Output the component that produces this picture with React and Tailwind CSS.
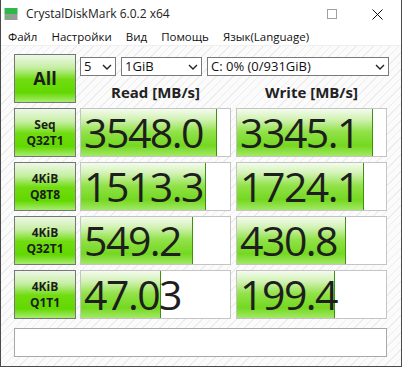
import React from 'react';

const rows = [
    { l1: 'Seq', l2: 'Q32T1', read: '3548.0', rw: 136, write: '3345.1', ww: 136 },
    { l1: '4KiB', l2: 'Q8T8', read: '1513.3', rw: 125, write: '1724.1', ww: 127 },
    { l1: '4KiB', l2: 'Q32T1', read: '549.2', rw: 112, write: '430.8', ww: 109 },
    { l1: '4KiB', l2: 'Q1T1', read: '47.03', rw: 80, write: '199.4', ww: 98 },
];

const btnBg =
    'bg-[linear-gradient(to_bottom,#eef8e8_0%,#c4eea0_28%,#70dc10_52%,#62d800_80%,#a8ec70_100%)]';

function Chevron() {
    return (
        <svg width="10" height="6" viewBox="0 0 10 6" className="shrink-0">
            <path d="M1 1 L5 5 L9 1" fill="none" stroke="#222" strokeWidth="1.4" />
        </svg>
    );
}

function Select({ w, text }) {
    return (
        <div className={`${w} h-[19px] border border-[#7a7a7a] bg-white flex items-center justify-between pl-[3px] pr-[3px] text-[13px] leading-none text-[#111]`}>
            <span>{text}</span>
            <Chevron />
        </div>
    );
}

function TestButton({ children, big }) {
    return (
        <div className={`w-[62px] h-[49px] border border-[#767676] ${btnBg} flex flex-col items-center justify-center font-bold text-[#1c1c1c] ${big ? 'text-[18px]' : 'text-[12px] leading-[16px]'}`}>
            {children}
        </div>
    );
}

function Meter({ value, fill }) {
    return (
        <div className="relative w-[151px] h-[49px] border border-[#c4c4c4] bg-white">
            <div
                className="absolute left-0 top-0 bottom-0 border-r border-[#3f8f12] bg-[linear-gradient(to_bottom,#f4fbef_0%,#d2f2b4_22%,#92e24a_48%,#74d820_78%,#a2e866_100%)]"
                style={{ width: fill }}
            />
            <div className="relative h-full flex items-center pl-[3px] text-[41px] leading-[47px] text-[#1e1e1e] tracking-[-1.5px] whitespace-nowrap">
                {value}
            </div>
        </div>
    );
}

export default function App() {
    return (
        <div className="w-[402px] h-[367px] bg-white border-x border-b border-[#4a4a4a] flex flex-col overflow-hidden font-['Open_Sans',sans-serif]">
            {/* Title bar */}
            <div className="h-[28px] flex items-center shrink-0">
                <svg width="14" height="14" viewBox="0 0 14 14" className="ml-[3px] mr-[8px]">
                    <rect x="0.5" y="1" width="13" height="6" fill="#2fb84a" />
                    <rect x="0.5" y="7" width="13" height="6" fill="#9a9a9a" />
                    <rect x="2" y="9" width="3" height="2" fill="#3ad14e" />
                </svg>
                <span className="text-[12px] text-[#222]">CrystalDiskMark 6.0.2 x64</span>
                <div className="ml-auto flex items-center">
                    <div className="w-[10px] h-[10px] border border-[#a0a0a0] mr-[35px]" />
                    <svg width="11" height="11" viewBox="0 0 11 11" className="mr-[18px]">
                        <path d="M0.5 0.5 L10.5 10.5 M10.5 0.5 L0.5 10.5" stroke="#111" strokeWidth="1" />
                    </svg>
                </div>
            </div>

            {/* Menu */}
            <div className="h-[17px] flex items-center gap-[14px] pl-[7px] text-[11.5px] text-[#111] shrink-0">
                <span>Файл</span>
                <span>Настройки</span>
                <span>Вид</span>
                <span>Помощь</span>
                <span>Язык(Language)</span>
            </div>
            <div className="h-px bg-[#f0f0f0] shrink-0" />

            {/* Client */}
            <div className="flex-1 pl-[13px] pt-[8px] bg-[#fbfbfb] bg-[repeating-linear-gradient(135deg,#fbfbfb_0px,#fbfbfb_5px,#ededed_5px,#ededed_6px)]">
                <div className="flex">
                    <TestButton big>All</TestButton>
                    <div className="ml-[4px] flex flex-col">
                        <div className="flex mt-[3px] gap-[5px]">
                            <Select w="w-[36px]" text="5" />
                            <Select w="w-[81px]" text="1GiB" />
                            <Select w="w-[182px]" text="C: 0% (0/931GiB)" />
                        </div>
                        <div className="flex mt-[6px] gap-[5px] text-[15px] font-bold text-[#222] leading-[20px]">
                            <div className="w-[151px] text-center">Read [MB/s]</div>
                            <div className="w-[151px] text-center">Write [MB/s]</div>
                        </div>
                    </div>
                </div>

                <div className="flex flex-col gap-[5px] mt-[5px]">
                    {rows.map((r, i) => (
                        <div key={i} className="flex">
                            <TestButton>
                                <span>{r.l1}</span>
                                <span>{r.l2}</span>
                            </TestButton>
                            <div className="ml-[4px] flex gap-[5px]">
                                <Meter value={r.read} fill={r.rw} />
                                <Meter value={r.write} fill={r.ww} />
                            </div>
                        </div>
                    ))}
                </div>

                <div className="mt-[9px] w-[373px] h-[29px] border border-[#a8a8a8] bg-white" />
            </div>
        </div>
    );
}
